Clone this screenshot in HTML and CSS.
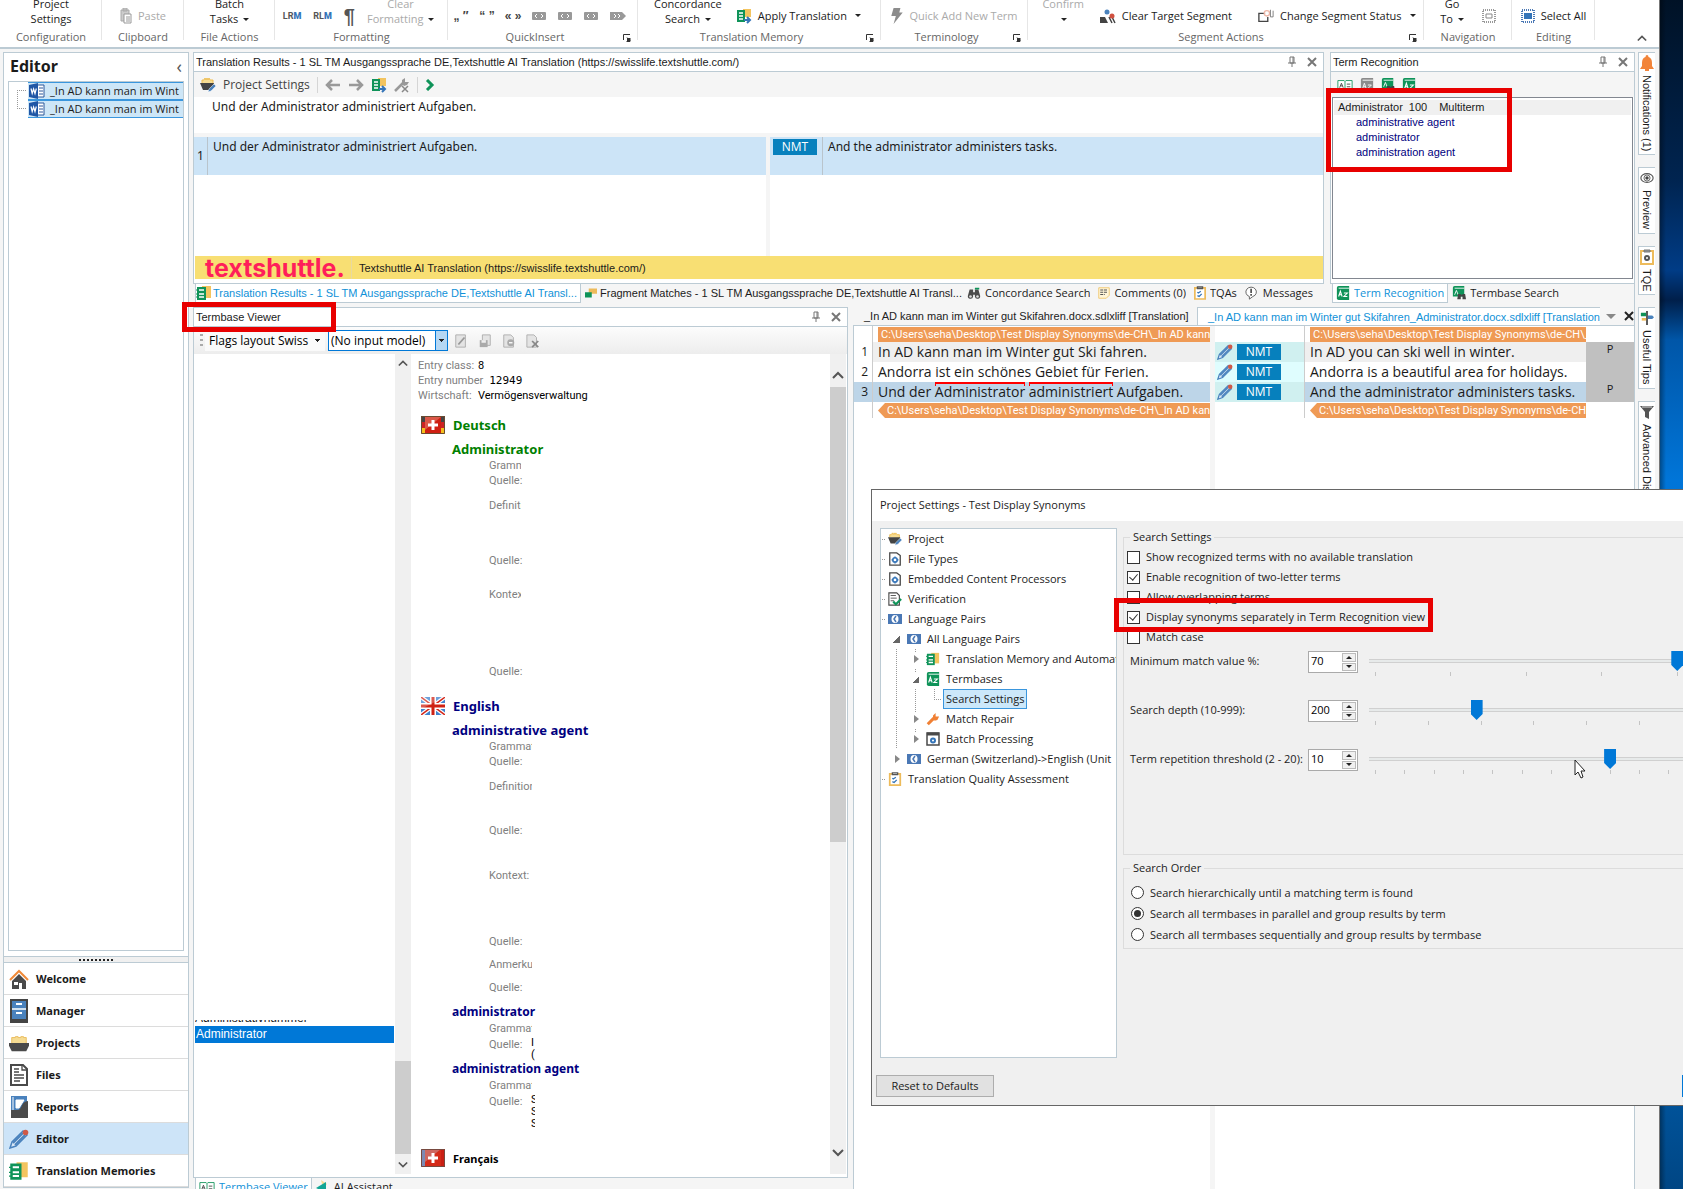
FILE: index.html
```html
<!DOCTYPE html>
<html lang="en">
<head>
<meta charset="utf-8">
<title>Editor</title>
<link rel="stylesheet" href="styles.css">
</head>
<body>
<svg class="sprite" aria-hidden="true">
  <symbol id="word" viewBox="0 0 16 16"><path d="M7 2h8v12H7z" fill="#fff" stroke="#2b579a"/><path d="M10 5h4M10 8h4M10 11h4" stroke="#2b579a"/><path d="M0 2l9-2v16l-9-2z" fill="#1f56a5"/><path d="M2 5.500l1.200 5L4.600 6l1.400 4.500 1.300-5" fill="none" stroke="#fff" stroke-width="1.200"/></symbol>
  <symbol id="project" viewBox="0 0 16 16"><path d="M2 6V3h2l1-2 1 2 1-2 1 2 1-2 1 2h3v4" fill="#f6dc93" stroke="#efbf55"/><path d="M0 6h14l-2 7H3z" fill="#444"/><path d="M8 15l1-3 5-5 2 2-5 5z" fill="#4a82bd" stroke="#fff" stroke-width=".5"/></symbol>
  <symbol id="tm" viewBox="0 0 16 16"><path d="M6 1h9v12H6z" fill="#f3c45f"/><path d="M1 2h9v13H1z" fill="#0f9359"/><path d="M3 5h5M3 9h5M3 12h5" stroke="#fff" stroke-width="1.500"/><path d="M0 5h2M0 9h2M0 12h2" stroke="#0f9359"/></symbol>
  <symbol id="tmarrow" viewBox="0 0 16 16"><path d="M7 1h8v8H7z" fill="#f3c45f"/><path d="M1 2h8v12H1z" fill="#0f9359"/><path d="M3 5h4M3 8h4M3 11h4" stroke="#fff" stroke-width="1.500"/><path d="M8 12h6M11 9l3 3-3 3" fill="none" stroke="#3474b8" stroke-width="2"/></symbol>
  <symbol id="wrenchx" viewBox="0 0 16 16"><path d="M1 14L9 6" stroke="#999" stroke-width="2.500"/><path d="M8 7V3l3-2v4h4l-2 3-3 1z" fill="#999"/><path d="M8 9l6 6M14 9l-6 6" stroke="#888" stroke-width="1.500"/></symbol>
  <symbol id="wrench" viewBox="0 0 16 16"><path d="M2 14L9 7" stroke="#f08034" stroke-width="3.500"/><path d="M8 8V4l3-3v4h4l-2 4-3 1z" fill="#f08034"/></symbol>
  <symbol id="left" viewBox="0 0 16 16"><path d="M15 8H3M7 3L2 8l5 5" fill="none" stroke="#999" stroke-width="2.500"/></symbol>
  <symbol id="right" viewBox="0 0 16 16"><path d="M1 8h12M9 3l5 5-5 5" fill="none" stroke="#999" stroke-width="2.500"/></symbol>
  <symbol id="go" viewBox="0 0 10 12"><path d="M2 1l5 5-5 5" fill="none" stroke="#0f9359" stroke-width="3"/></symbol>
  <symbol id="pin" viewBox="0 0 10 12"><path d="M3 1h4v6H3zM1 7h8M5 7v4M6 1v6" fill="none" stroke="#777"/></symbol>
  <symbol id="close" viewBox="0 0 10 10"><path d="M1 1l8 8M9 1L1 9" stroke="currentColor" stroke-width="2"/></symbol>
  <symbol id="az" viewBox="0 0 16 16"><path d="M1 2q0-2 2-2h12v16H3q-2 0-2-2z" fill="#0f9359"/><path d="M3 2.500h12" stroke="#fff"/><path d="M3 12l2-6 2 6M4 10h2M9 8h4l-4 4h4" fill="none" stroke="#fff" stroke-width="1.200"/></symbol>
  <symbol id="azgray" viewBox="0 0 16 16"><path d="M1 2q0-2 2-2h12v16H3q-2 0-2-2z" fill="#8b8b8b"/><path d="M3 2.500h12" stroke="#fff"/><path d="M3 12l2-6 2 6M4 10h2M9 8h4l-4 4h4" fill="none" stroke="#fff"/></symbol>
  <symbol id="azfind" viewBox="0 0 16 16"><path d="M1 2q0-2 2-2h11v12H1z" fill="#0f9359"/><path d="M3 2.500h11M3 10l2-5 2 5" fill="none" stroke="#fff"/><path d="M7 9h3v1h2V9h3l1 6h-4v-3h-2v3H6z" fill="#444"/></symbol>
  <symbol id="book" viewBox="0 0 18 14"><path d="M1 2h7l1 1 1-1h7v11h-7l-1 1-1-1H1zM9 3v10" fill="#fff" stroke="#15965c"/><path d="M3 10l2-5 2 5M4 8h2M11 6h4M11 9h4" fill="none" stroke="#444"/></symbol>
  <symbol id="frag" viewBox="0 0 16 16"><path d="M5 2h11v7H5z" fill="#edbb5b"/><path d="M0 7h9v7H0z" fill="#0f9359"/></symbol>
  <symbol id="bino" viewBox="0 0 16 16"><path d="M3 4h4v3h2V4h4l2 7a3 3 0 1 1-6 1V10H7v2a3 3 0 1 1-6-1z" fill="#4a4a4a"/><circle cx="4" cy="12" r="1.500" fill="#ddd"/><circle cx="12" cy="12" r="1.500" fill="#ddd"/><path d="M9 2h5v2H9z" fill="#0f9359"/></symbol>
  <symbol id="note" viewBox="0 0 16 16"><path d="M1 1h14v10l-4 4H1z" fill="#fff5d8" stroke="#eebd57"/><path d="M3 4h9M3 7h9M3 10h6" stroke="#555" stroke-width="1.500" stroke-dasharray="4 1"/></symbol>
  <symbol id="clip" viewBox="0 0 14 16"><path d="M1 2h12v13H1z" fill="#fff" stroke="#edbb5b" stroke-width="2"/><path d="M4 3V1h6v2z" fill="#fff" stroke="#555" stroke-width="1.500"/><path d="M4 7l1 1 3-2M4 11l2 1 3-3" fill="none" stroke="#3474b8" stroke-width="1.500"/></symbol>
  <symbol id="clipdot" viewBox="0 0 14 16"><path d="M1 2h12v13H1z" fill="#fff" stroke="#edbb5b" stroke-width="2"/><path d="M4 3V1h6v2z" fill="#999" stroke="#777"/><circle cx="7" cy="9" r="2" fill="none" stroke="#555" stroke-width="2"/></symbol>
  <symbol id="msg" viewBox="0 0 16 16"><path d="M5 12a6 5.500 0 1 1 4 0l-4 3z" fill="#fff" stroke="#555"/><path d="M7 3v5M7 9v2" stroke="#555" stroke-width="2"/></symbol>
  <symbol id="home" viewBox="0 0 20 20"><path d="M1 11l9-9 9 9" fill="none" stroke="#f08a38" stroke-width="2"/><path d="M3 12l7-7 7 7v8h-4v-6h-3v6H3z" fill="#4a4a4a"/><path d="M5 13h4v3H5z" fill="#fff"/></symbol>
  <symbol id="cabinet" viewBox="0 0 20 24"><path d="M2 1h16v22H2z" fill="#4a82bd" stroke="#444" stroke-width="2"/><path d="M3 10h14" stroke="#fff" stroke-width="1.500"/><path d="M7 5h6M7 14h6" stroke="#fff" stroke-width="2"/><path d="M2 20h16v3H2z" fill="#444"/></symbol>
  <symbol id="folder" viewBox="0 0 22 20"><path d="M3 10V4h4v-1h3v1h3v-1h3v1h3v6" fill="#f6dc93" stroke="#e9bb59"/><path d="M0 10h22v3l-3 6H3l-3-6z" fill="#4a4a4a"/></symbol>
  <symbol id="files" viewBox="0 0 20 24"><path d="M2 2h12l4 4v16H2z" fill="#fff" stroke="#4a4a4a" stroke-width="2"/><path d="M13 2v5h5M5 6h5M5 9h5M5 12h10M5 15h10M5 18h6" fill="none" stroke="#4a4a4a" stroke-width="1.300"/></symbol>
  <symbol id="reports" viewBox="0 0 20 24"><path d="M2 1h16v14H2z" fill="#4a82bd"/><path d="M4 2v14M7 5h8l-5 8H7z" fill="#fff" stroke="#fff"/><path d="M2 15h7c4 0 3-9 10-9v17H2z" fill="#4a4a4a"/></symbol>
  <symbol id="pencil" viewBox="0 0 20 20"><path d="M1 19l2-6L14 2l4 4L7 17z" fill="#dbe8f5" stroke="#4a82bd" stroke-width="1.500"/><path d="M4 14L14 4M6 16L16 6" stroke="#4a82bd" stroke-width="2"/><circle cx="16.500" cy="3.500" r="2.800" fill="#cf5947"/></symbol>
  <symbol id="geardoc" viewBox="0 0 14 16"><path d="M1 1h8l4 3v11H1z" fill="#fff" stroke="#4a4a4a" stroke-width="1.500"/><circle cx="7" cy="9" r="2.500" fill="#fff" stroke="#3474b8" stroke-width="1.800"/><path d="M7 5v2M7 11v2M3 9h2M9 9h2" stroke="#3474b8" stroke-width="1.500"/></symbol>
  <symbol id="verify" viewBox="0 0 16 16"><path d="M1 1h9l3 3v11H1z" fill="#fff" stroke="#4a4a4a" stroke-width="1.300"/><path d="M3 4h6M3 7h7M3 10h4" stroke="#4a4a4a"/><path d="M6 11l3 3 6-6" fill="none" stroke="#0f9359" stroke-width="2.500"/></symbol>
  <symbol id="lang" viewBox="0 0 14 12"><path d="M0 1h14v10H0z" fill="#4a78b5"/><ellipse cx="7" cy="6" rx="3.500" ry="4" fill="#fff"/><path d="M8 3L6 6l2 3" fill="none" stroke="#4a78b5" stroke-width="1.500"/></symbol>
  <symbol id="batch" viewBox="0 0 14 14"><path d="M1 1h12v12H1z" fill="#fff" stroke="#4a4a4a" stroke-width="1.500"/><path d="M1 2h12" stroke="#4a4a4a" stroke-width="3"/><circle cx="7" cy="8.500" r="2" fill="#fff" stroke="#3474b8" stroke-width="2"/></symbol>
  <symbol id="launch" viewBox="0 0 8 8"><path d="M.500 6V.500H7M4 3.500l3 3M7 4v3.500H3.500" fill="none" stroke="#333"/><path d="M4 4h3v3H4z" fill="#333"/></symbol>
  <symbol id="bell" viewBox="0 0 14 16"><path d="M7 0q1.500 0 1.500 2Q12 3 12 8v3l2 3H0l2-3V8Q2 3 5.500 2 5.500 0 7 0z" fill="#f2843a"/><path d="M5 15h4" stroke="#f2843a" stroke-width="2"/></symbol>
  <symbol id="eye" viewBox="0 0 16 14"><ellipse cx="8" cy="7" rx="7" ry="5" fill="#fff" stroke="#555" stroke-width="1.300"/><circle cx="8" cy="7" r="3.500" fill="none" stroke="#555"/><circle cx="8" cy="7" r="2" fill="#444"/></symbol>
  <symbol id="tips" viewBox="0 0 16 16"><path d="M8 0v16" stroke="#444" stroke-width="2"/><path d="M1 2h6v4H1z" fill="#0f9359"/><path d="M9 5h5l2 2-2 2H9z" fill="#4a82bd"/><path d="M2 8h5v3H2z" fill="#edbb5b"/></symbol>
  <symbol id="funnel" viewBox="0 0 14 14"><path d="M0 1h14L9 7v7l-4-2V7z" fill="#555"/><path d="M2 2h10" stroke="#ddd"/></symbol>
  <symbol id="ai" viewBox="0 0 14 14"><path d="M5 0l6 4-4 4z" fill="#f6dc93"/><path d="M0 8l10-6v11z" fill="#12a595"/><path d="M9 9l5 5H8z" fill="#e58aa8"/></symbol>
  <symbol id="paste" viewBox="0 0 12 16"><path d="M1 2h8v11H1zM3 0h4v3H3z" fill="#ccc" stroke="#aaa"/><path d="M4 6h7v9H4z" fill="#fff" stroke="#999"/><path d="M6 9h4M6 11h4M6 13h4" stroke="#999"/></symbol>
  <symbol id="bolt" viewBox="0 0 10 14"><path d="M2 0h6L7 4h3L2 14l2-7H0z" fill="#8c8c8c"/></symbol>
  <symbol id="clear" viewBox="0 0 16 14"><path d="M0 8h5l3 6H0z" fill="#444"/><path d="M9 8l3 6M12 8l3 6" stroke="#444" stroke-width="1.500"/><circle cx="7" cy="3" r="2.500" fill="#4a82bd"/><circle cx="12" cy="7" r="2.500" fill="#d0503f"/></symbol>
  <symbol id="status" viewBox="0 0 18 14"><path d="M8 4H1v9h10V8" fill="none" stroke="#444" stroke-width="1.500"/><circle cx="10" cy="4" r="3" fill="none" stroke="#f0b9a9" stroke-width="1.500"/><path d="M14 0v8h3V1" fill="none" stroke="#777"/></symbol>
  <symbol id="selblue" viewBox="0 0 14 14"><path d="M1 1h12v12H1z" fill="none" stroke="#4a78b5" stroke-dasharray="1 1" stroke-width="2"/><path d="M3 4h8v6H3z" fill="#3474b8"/></symbol>
  <symbol id="selgray" viewBox="0 0 14 14"><path d="M1 1h12v12H1z" fill="none" stroke="#999" stroke-dasharray="1 1" stroke-width="2"/><path d="M4 5h6v4H4z" fill="#fff" stroke="#888"/></symbol>
  <symbol id="tagi" viewBox="0 0 14 8"><rect width="14" height="8" rx="1" fill="#999"/><path d="M5 2L3 4l2 2M9 2l2 2-2 2" fill="none" stroke="#fff"/></symbol>
  <symbol id="tagend" viewBox="0 0 16 8"><path d="M0 0h12l4 4-4 4H0z" fill="#999"/><path d="M4 2l2 2-2 2M8 2l2 2-2 2" fill="none" stroke="#fff"/></symbol>
  <symbol id="up" viewBox="0 0 12 8"><path d="M1 7l5-5 5 5" fill="none" stroke="#555" stroke-width="2"/></symbol>
  <symbol id="down" viewBox="0 0 12 8"><path d="M1 1l5 5 5-5" fill="none" stroke="#555" stroke-width="2"/></symbol>
  <symbol id="docedit" viewBox="0 0 14 16"><path d="M1 1h11v14H1z" fill="#e4e4e4" stroke="#aaa"/><path d="M4 12l7-8" stroke="#999" stroke-width="2"/></symbol>
  <symbol id="docsave" viewBox="0 0 14 16"><path d="M4 1h9v12H4z" fill="#e4e4e4" stroke="#aaa"/><path d="M1 7h9v8H1z" fill="#aaa"/><path d="M3 7h5v3H3z" fill="#eee"/></symbol>
  <symbol id="docminus" viewBox="0 0 14 16"><path d="M1 1h8l3 3v11H1z" fill="#e4e4e4" stroke="#aaa"/><circle cx="9" cy="10" r="4" fill="#aaa"/><path d="M7 10h4" stroke="#fff" stroke-width="1.500"/></symbol>
  <symbol id="docx" viewBox="0 0 16 16"><path d="M1 1h8l3 3v11H1z" fill="#e4e4e4" stroke="#aaa"/><path d="M7 8l7 7M14 8l-7 7" stroke="#888" stroke-width="2"/></symbol>
  <symbol id="flagde" viewBox="0 0 24 18"><path d="M0 0h24v18H0z" fill="#444"/><path d="M0 6h24v6H0z" fill="#c22"/><path d="M0 12h24v6H0z" fill="#f4bf1c"/><path d="M4 1h16v16H4z" fill="#cf1f12"/><path d="M4 1h16L4 14z" fill="#e0705f" opacity=".7"/><path d="M12 4v10M7 9h10" stroke="#fff" stroke-width="3"/><path d="M.500.500h23v17H.500z" fill="none" stroke="#6b4a30"/></symbol>
  <symbol id="flagfr" viewBox="0 0 24 18"><path d="M0 0h24v18H0z" fill="#c91f14"/><path d="M0 0h5v18H0z" fill="#2f6fc0"/><path d="M4 1h16v16H4z" fill="#d42a18"/><path d="M0 0h20L4 13v5H0z" fill="#c8a4a8" opacity=".5"/><path d="M12 4v10M7 9h10" stroke="#fff" stroke-width="3"/><path d="M.500.500h23v17H.500z" fill="none" stroke="#77493f"/></symbol>
  <symbol id="flaguk" viewBox="0 0 24 18"><path d="M0 0h24v18H0z" fill="#3f83cf"/><path d="M0 0l24 18M24 0L0 18" stroke="#fff" stroke-width="4"/><path d="M0 0l24 18M24 0L0 18" stroke="#d3281b" stroke-width="1.500"/><path d="M12 0v18M0 9h24" stroke="#fff" stroke-width="6"/><path d="M12 0v18M0 9h24" stroke="#cf2214" stroke-width="3"/><path d="M0 0h24L0 12z" fill="#fff" opacity=".25"/></symbol>
  <symbol id="cursor" viewBox="0 0 12 20"><path d="M1 1v15l3-3 3 6 2-1-2-6h4z" fill="#fff" stroke="#222"/></symbol>
</svg>

<div class="app">
  <header class="ribbon">
    <section class="group g-config"><div class="items"><button class="two">Project<br>Settings</button></div><h2>Configuration</h2></section>
    <section class="group g-clip"><div class="items"><button disabled><svg class="i12x16"><use href="#paste"/></svg>Paste</button></div><h2>Clipboard</h2></section>
    <section class="group g-file"><div class="items"><button class="two">Batch<br>Tasks <i class="caret"></i></button></div><h2>File Actions</h2></section>
    <section class="group g-format"><div class="items"><button class="mark">LR<b>M</b></button><button class="mark">RL<b>M</b></button><button class="pilcrow">¶</button><button class="two" disabled>Clear<br>Formatting <i class="caret"></i></button></div><h2>Formatting</h2></section>
    <section class="group g-quick"><div class="items"><button class="q">„ ″</button><button class="q">“ ”</button><button class="q">« »</button><button aria-label="Tag pair"><svg class="i14x8"><use href="#tagi"/></svg></button><button aria-label="Tag"><svg class="i14x8"><use href="#tagi"/></svg></button><button aria-label="Placeholder"><svg class="i14x8"><use href="#tagi"/></svg></button><button aria-label="End tag"><svg class="i16x8"><use href="#tagend"/></svg></button></div><h2>QuickInsert</h2><svg class="launch"><use href="#launch"/></svg></section>
    <section class="group g-tm"><div class="items"><button class="two">Concordance<br>Search <i class="caret"></i></button><button><svg class="i16"><use href="#tmarrow"/></svg>Apply Translation <i class="caret"></i></button></div><h2>Translation Memory</h2><svg class="launch"><use href="#launch"/></svg></section>
    <section class="group g-term"><div class="items"><button disabled><svg class="i12x16"><use href="#bolt"/></svg>Quick Add New Term</button></div><h2>Terminology</h2><svg class="launch"><use href="#launch"/></svg></section>
    <section class="group g-seg"><div class="items"><button class="two" disabled>Confirm<br><i class="caret"></i></button><button><svg class="i16"><use href="#clear"/></svg>Clear Target Segment</button><button class="later"><svg class="i16"><use href="#status"/></svg>Change Segment Status <i class="caret"></i></button></div><h2>Segment Actions</h2><svg class="launch"><use href="#launch"/></svg></section>
    <section class="group g-nav"><div class="items"><button class="two">Go<br>To <i class="caret"></i></button><button aria-label="Navigate"><svg class="i14"><use href="#selgray"/></svg></button></div><h2>Navigation</h2></section>
    <section class="group g-edit"><div class="items"><button><svg class="i14"><use href="#selblue"/></svg>Select All</button></div><h2>Editing</h2></section>
    <button class="collapse" aria-label="Collapse ribbon"><svg class="i10x8"><use href="#up"/></svg></button>
  </header>

  <div class="work">
    <aside class="side">
      <div class="side-title"><h1>Editor</h1><span>‹</span></div>
      <ul class="doctree">
        <li><svg class="i16"><use href="#word"/></svg><span>_In AD kann man im Wint</span></li>
        <li><svg class="i16"><use href="#word"/></svg><span>_In AD kann man im Wint</span></li>
      </ul>
      <div class="grip"></div>
      <nav>
        <a href="#welcome"><svg class="i20"><use href="#home"/></svg>Welcome</a>
        <a href="#manager"><svg class="i20x24"><use href="#cabinet"/></svg>Manager</a>
        <a href="#projects"><svg class="i20"><use href="#folder"/></svg>Projects</a>
        <a href="#files"><svg class="i20x24"><use href="#files"/></svg>Files</a>
        <a href="#reports"><svg class="i20x24"><use href="#reports"/></svg>Reports</a>
        <a href="#editor" class="on"><svg class="i20"><use href="#pencil"/></svg>Editor</a>
        <a href="#tms"><svg class="i20"><use href="#tm"/></svg>Translation Memories</a>
      </nav>
    </aside>

    <main class="main">
      <div class="upper">
        <section class="pane results">
          <header class="pane-title"><span>Translation Results - 1 SL TM Ausgangssprache DE,Textshuttle AI Translation (https://swisslife.textshuttle.com/)</span><svg class="i10x12"><use href="#pin"/></svg><svg class="i10"><use href="#close"/></svg></header>
          <div class="tools">
            <svg class="i16"><use href="#project"/></svg><button>Project Settings</button><i class="sep"></i>
            <svg class="i16"><use href="#left"/></svg><svg class="i16"><use href="#right"/></svg><svg class="i16"><use href="#tmarrow"/></svg><svg class="i16"><use href="#wrenchx"/></svg><i class="sep"></i><svg class="i10x12"><use href="#go"/></svg>
          </div>
          <p class="query">Und der Administrator administriert Aufgaben.</p>
          <div class="matches">
            <div class="m-src"><div class="m-row"><span class="num">1</span><span class="txt">Und der Administrator administriert Aufgaben.</span></div></div>
            <div class="m-tgt"><div class="m-row"><span class="st"><span class="nmt">NMT</span></span><span class="txt">And the administrator administers tasks.</span></div></div>
          </div>
          <div class="provider"><strong>textshuttle.</strong><span>Textshuttle AI Translation (https://swisslife.textshuttle.com/)</span></div>
        </section>
        <section class="pane terms">
          <header class="pane-title"><span>Term Recognition</span><svg class="i10x12"><use href="#pin"/></svg><svg class="i10"><use href="#close"/></svg></header>
          <div class="tools"><svg class="i16"><use href="#book"/></svg><svg class="i14"><use href="#azgray"/></svg><svg class="i14"><use href="#azfind"/></svg><svg class="i14"><use href="#az"/></svg></div>
          <div class="termlist">
            <p class="hit"><span>Administrator</span><span>100</span><span>Multiterm</span></p>
            <ul><li>administrative agent</li><li>administrator</li><li>administration agent</li></ul>
          </div>
        </section>
        <div class="tabs t-results">
          <button class="on wide"><svg class="i16"><use href="#tm"/></svg><span>Translation Results - 1 SL TM Ausgangssprache DE,Textshuttle AI Transl...</span></button>
          <button class="wide2"><svg class="i12x16"><use href="#frag"/></svg><span>Fragment Matches - 1 SL TM Ausgangssprache DE,Textshuttle AI Transl...</span></button>
          <button><svg class="i14"><use href="#bino"/></svg><span>Concordance Search</span></button>
          <button><svg class="i12x16"><use href="#note"/></svg><span>Comments (0)</span></button>
          <button><svg class="i12x16"><use href="#clip"/></svg><span>TQAs</span></button>
          <button><svg class="i14"><use href="#msg"/></svg><span>Messages</span></button>
        </div>
        <div class="tabs t-terms">
          <button class="on"><svg class="i14"><use href="#az"/></svg><span>Term Recognition</span></button>
          <button><svg class="i14"><use href="#azfind"/></svg><span>Termbase Search</span></button>
        </div>
      </div>

      <div class="lower">
        <div class="viewer">
          <section class="pane">
            <header class="pane-title"><span>Termbase Viewer</span><svg class="i10x12"><use href="#pin"/></svg><svg class="i10"><use href="#close"/></svg></header>
            <div class="vtools">
              <i class="handle"></i>
              <select class="plain" aria-label="Layout"><option>Flags layout Swiss</option></select>
              <select class="model" aria-label="Input model"><option>(No input model)</option></select>
              <svg class="i14"><use href="#docedit"/></svg><svg class="i14"><use href="#docsave"/></svg><svg class="i14"><use href="#docminus"/></svg><svg class="i14"><use href="#docx"/></svg>
            </div>
            <div class="vbody">
              <div class="index"><p class="cut">Administrativnummer</p><p class="sel">Administrator</p></div>
              <div class="bar left"><svg class="i10x8"><use href="#up"/></svg><i></i><svg class="i10x8"><use href="#down"/></svg></div>
              <article class="entry">
                <p class="meta"><span>Entry class:</span>8</p>
                <p class="meta"><span>Entry number</span><tt>12949</tt></p>
                <p class="meta"><span>Wirtschaft:</span>Vermögensverwaltung</p>
                <h3 class="de first"><svg class="flag"><use href="#flagde"/></svg>Deutsch</h3>
                <h4 class="de">Administrator</h4>
                <p class="f cut32">Grammatik:</p>
                <p class="f">Quelle:</p>
                <p class="f cut32 s9">Definition:</p>
                <p class="f s40">Quelle:</p>
                <p class="f cut32 s19">Kontext:</p>
                <p class="f s62">Quelle:</p>
                <h3 class="en"><svg class="flag"><use href="#flaguk"/></svg>English</h3>
                <h4 class="en">administrative agent</h4>
                <p class="f cut43">Grammatik:</p>
                <p class="f">Quelle:</p>
                <p class="f cut43 s9">Definition:</p>
                <p class="f s29">Quelle:</p>
                <p class="f s30">Kontext:</p>
                <p class="f s51">Quelle:</p>
                <p class="f cut43 s8">Anmerkung:</p>
                <p class="f s8">Quelle:</p>
                <h4 class="en syn">administrator</h4>
                <p class="f cut43">Grammatik:</p>
                <p class="f src"><span>Quelle:</span><span class="val">I<br>(</span></p>
                <h4 class="en syn">administration agent</h4>
                <p class="f cut43">Grammatik:</p>
                <p class="f src tall"><span>Quelle:</span><span class="val">S<br>S<br>S</span></p>
                <h3 class="fr"><svg class="flag"><use href="#flagfr"/></svg>Français</h3>
              </article>
              <div class="bar right"><svg class="i12x8"><use href="#up"/></svg><i></i><svg class="i12x8"><use href="#down"/></svg></div>
            </div>
          </section>
          <div class="tabs t-viewer"><button class="on"><svg class="i16"><use href="#book"/></svg><span>Termbase Viewer</span></button><button><svg class="i14"><use href="#ai"/></svg><span>AI Assistant</span></button></div>
        </div>

        <section class="docs">
          <div class="doctabs"><button>_In AD kann man im Winter gut Skifahren.docx.sdlxliff [Translation]</button><button class="on">_In AD kann man im Winter gut Skifahren_Administrator.docx.sdlxliff [Translation]</button><i class="tri"></i><svg class="i10"><use href="#close"/></svg></div>
          <table class="grid">
            <colgroup><col class="c-n"><col><col class="c-g"><col class="c-s"><col class="c-t"><col class="c-p"></colgroup>
            <tr class="tags"><td></td><td class="s"><div class="tag">C:\Users\seha\Desktop\Test Display Synonyms\de-CH\_In AD kann man im Winter</div></td><td class="g"></td><td></td><td class="s"><div class="tag">C:\Users\seha\Desktop\Test Display Synonyms\de-CH\_In AD kann</div></td><td></td></tr>
            <tr class="r1"><td>1</td><td class="s">In AD kann man im Winter gut Ski fahren.</td><td class="g"></td><td class="st"><svg class="i16"><use href="#pencil"/></svg><span class="nmt">NMT</span></td><td class="s">In AD you can ski well in winter.</td><td class="p">P</td></tr>
            <tr class="r2"><td>2</td><td class="s">Andorra ist ein schönes Gebiet für Ferien.</td><td class="g"></td><td class="st"><svg class="i16"><use href="#pencil"/></svg><span class="nmt">NMT</span></td><td class="s">Andorra is a beautiful area for holidays.</td><td class="p"></td></tr>
            <tr class="r3"><td>3</td><td class="s">Und der <span class="term">Administrator</span> <span class="term">administriert</span> Aufgaben.</td><td class="g"></td><td class="st"><svg class="i16"><use href="#pencil"/></svg><span class="nmt">NMT</span></td><td class="s">And the administrator administers tasks.</td><td class="p">P</td></tr>
            <tr class="tags"><td></td><td class="s"><div class="tag end">C:\Users\seha\Desktop\Test Display Synonyms\de-CH\_In AD kann man im Winter</div></td><td class="g"></td><td></td><td class="s"><div class="tag end">C:\Users\seha\Desktop\Test Display Synonyms\de-CH\_In AD kann</div></td><td></td></tr>
            <tr class="rest"><td></td><td></td><td class="g"></td><td></td><td></td><td></td></tr>
          </table>
        </section>
      </div>
    </main>

    <div class="vtabs">
      <button><svg class="i14x16"><use href="#bell"/></svg><span>Notifications (1)</span></button>
      <button><svg class="i14x16"><use href="#eye"/></svg><span>Preview</span></button>
      <button><svg class="i14x16"><use href="#clipdot"/></svg><span>TQE</span></button>
      <button><svg class="i14x16"><use href="#tips"/></svg><span>Useful Tips</span></button>
      <button><svg class="i14x16"><use href="#funnel"/></svg><span>Advanced Display Filter</span></button>
    </div>
  </div>
</div>
<div class="wallpaper"></div>

<section class="dialog" role="dialog" aria-labelledby="dlg">
  <h2 id="dlg">Project Settings - Test Display Synonyms</h2>
  <div class="dlg-body">
    <ul class="tree">
      <li><svg class="i16"><use href="#project"/></svg>Project</li>
      <li><svg class="i16"><use href="#geardoc"/></svg>File Types</li>
      <li><svg class="i16"><use href="#geardoc"/></svg>Embedded Content Processors</li>
      <li><svg class="i16"><use href="#verify"/></svg>Verification</li>
      <li><svg class="i16"><use href="#lang"/></svg>Language Pairs</li>
      <li class="l1"><i class="open"></i><svg class="i16"><use href="#lang"/></svg>All Language Pairs</li>
      <li class="l2"><i class="shut"></i><svg class="i16"><use href="#tm"/></svg>Translation Memory and Automat</li>
      <li class="l2"><i class="open"></i><svg class="i16"><use href="#az"/></svg>Termbases</li>
      <li class="l3"><span class="picked">Search Settings</span></li>
      <li class="l2"><i class="shut"></i><svg class="i16"><use href="#wrench"/></svg>Match Repair</li>
      <li class="l2"><i class="shut"></i><svg class="i16"><use href="#batch"/></svg>Batch Processing</li>
      <li class="l1"><i class="shut"></i><svg class="i16"><use href="#lang"/></svg>German (Switzerland)-&gt;English (Unit</li>
      <li><svg class="i16"><use href="#clip"/></svg>Translation Quality Assessment</li>
    </ul>
    <div class="opts">
      <fieldset class="fs1">
        <legend>Search Settings</legend>
        <label><input type="checkbox">Show recognized terms with no available translation</label>
        <label><input type="checkbox" checked>Enable recognition of two-letter terms</label>
        <label><input type="checkbox">Allow overlapping terms</label>
        <label><input type="checkbox" checked>Display synonyms separately in Term Recognition view</label>
        <label><input type="checkbox">Match case</label>
        <div class="num-row"><label for="n1">Minimum match value %:</label><span class="spin"><input id="n1" type="text" value="70"><span><button aria-label="More"></button><button aria-label="Less" class="less"></button></span></span>
          <div class="slide"><input type="range" min="30" max="100" value="70" aria-label="Minimum match value"><div class="ticks"><i></i><i></i><i></i><i></i><i></i><i></i><i></i><i></i></div></div></div>
        <div class="num-row"><label for="n2">Search depth (10-999):</label><span class="spin"><input id="n2" type="text" value="200"><span><button aria-label="More"></button><button aria-label="Less" class="less"></button></span></span>
          <div class="slide"><input type="range" min="10" max="999" value="200" aria-label="Search depth"><div class="ticks"><i></i><i></i><i></i><i></i><i></i><i></i><i></i><i></i><i></i><i></i><i></i></div></div></div>
        <div class="num-row"><label for="n3">Term repetition threshold (2 - 20):</label><span class="spin"><input id="n3" type="text" value="10"><span><button aria-label="More"></button><button aria-label="Less" class="less"></button></span></span>
          <div class="slide"><input type="range" min="2" max="20" value="10" aria-label="Term repetition threshold"><div class="ticks"><i></i><i></i><i></i><i></i><i></i><i></i><i></i><i></i><i></i><i></i><i></i><i></i><i></i><i></i><i></i><i></i><i></i><i></i><i></i></div></div></div>
      </fieldset>
      <fieldset class="fs2">
        <legend>Search Order</legend>
        <label><input type="radio" name="order">Search hierarchically until a matching term is found</label>
        <label><input type="radio" name="order" checked>Search all termbases in parallel and group results by term</label>
        <label><input type="radio" name="order">Search all termbases sequentially and group results by termbase</label>
      </fieldset>
    </div>
  </div>
  <footer><button>Reset to Defaults</button><button class="ok" aria-label="OK"></button></footer>
</section>
<svg class="cursor"><use href="#cursor"/></svg>
<div class="callout c1"></div>
<div class="callout c2"></div>
<div class="callout c3"></div>
</body>
</html>
```
FILE: styles.css
```css
:root {
  --ui: "Open Sans", "Noto Sans", sans-serif;
  --wide: "Noto Sans", "Open Sans", sans-serif;
  --arial: "Liberation Sans", Arial, sans-serif;
  --narrow: Roboto, "Liberation Sans", sans-serif;
  --line: #bccbd4;
  --ink: #1b1b1b;
  --navy: #000080;
  --dots: repeating-linear-gradient(#999 0 1px, transparent 1px 2px);
  --dots-x: repeating-linear-gradient(90deg, #999 0 1px, transparent 1px 2px);
}
* { box-sizing: border-box; }
body {
  margin: 0; height: 100vh; overflow: hidden; position: relative;
  display: flex; font: 11px/14px var(--ui); color: var(--ink); background: #f5f5f5;
}
h1, h2, h3, h4, p, ul { margin: 0; padding: 0; list-style: none; font-size: inherit; }
button { font: inherit; color: inherit; background: none; border: 0; padding: 0; margin: 0; white-space: nowrap; }
a { color: inherit; text-decoration: none; }
svg { flex: none; display: block; }
.sprite { position: absolute; width: 0; height: 0; }
.i10 { width: 10px; height: 10px; }
.i14 { width: 14px; height: 14px; }
.i16 { width: 16px; height: 16px; }
.i20 { width: 20px; height: 20px; }
.i20x24 { width: 20px; height: 24px; }
.i10x12 { width: 10px; height: 12px; }
.i10x8 { width: 10px; height: 8px; }
.i12x8 { width: 12px; height: 8px; }
.i12x16 { width: 12px; height: 16px; }
.i14x16 { width: 14px; height: 16px; }
.i14x8 { width: 14px; height: 8px; }
.i16x8 { width: 16px; height: 8px; }

.app { flex: 1; min-width: 0; display: flex; flex-direction: column; border-right: 1px solid #777; }
.wallpaper { width: 23px; background: linear-gradient(90deg, rgba(0, 0, 0, .35), transparent 6px), linear-gradient(#001226, #002450 180px, #003c86 270px, #001f4a 300px, #0056a8 340px, #0075d8 480px, #0064b8 800px, #005299 1105px, #004684); }

/* ribbon */
.ribbon { height: 49px; flex: none; display: flex; background: #fff; border-bottom: 2px solid #bccbd4; overflow: hidden; }
.group { position: relative; flex: none; height: 44px; display: flex; flex-direction: column; justify-content: flex-end; }
.group::after { content: ""; position: absolute; right: 0; top: 0; height: 40px; border-right: 1px solid #e6e6e6; }
.group h2 { font-weight: 400; color: #666; text-align: center; margin-top: 3px; }
.items { height: 22px; display: flex; align-items: center; justify-content: center; }
.items button { display: flex; align-items: center; gap: 6px; }
.items .two { display: block; align-self: flex-end; line-height: 15px; text-align: center; padding-bottom: 1px; }
.items button:disabled { color: #aaa; }
.items .mark { font: 700 9px/14px var(--narrow); gap: 0; color: #555; }
.mark b { color: #3474b8; }
.items .pilcrow { font: 700 20px/20px var(--arial); color: #555; }
.items .q { font: 700 12px/14px var(--arial); color: #444; width: 14px; justify-content: center; }
.caret { display: inline-block; border: 3px solid transparent; border-top-color: #222; border-bottom: 0; margin: 0 0 2px 2px; }
.launch { position: absolute; right: 7px; top: 34px; width: 8px; height: 8px; }
.g-config { width: 102px; } .g-clip { width: 82px; } .g-file { width: 91px; }
.g-format { width: 173px; } .g-format .items { gap: 12px; padding-right: 6px; }
.g-quick { width: 190px; } .g-quick .items { gap: 12px; padding-right: 6px; }
.g-tm { width: 243px; } .g-tm .items { gap: 14px; padding-right: 4px; }
.g-term { width: 147px; } .g-quick h2, .g-tm h2, .g-term h2 { padding-right: 16px; }
.g-seg { width: 396px; } .g-seg .items { gap: 16px; padding-left: 6px; } .later { margin-left: 10px; }
.g-seg h2 { padding-right: 10px; }
.g-nav { width: 88px; } .g-nav .items { gap: 18px; }
.g-edit { width: 83px; }
.collapse { margin-left: auto; align-self: flex-end; padding: 5px 12px; }

.work { flex: 1; min-height: 0; display: flex; padding-top: 3px; }

/* sidebar */
.side { width: 186px; margin: 0 4px 1px 3px; flex: none; display: flex; flex-direction: column; background: #fff; border: 1px solid var(--line); }
.side-title { height: 26px; margin-bottom: 2px; display: flex; align-items: center; justify-content: space-between; padding: 0 6px; }
.side-title h1 { font: 700 16px/20px var(--wide); }
.side-title span { font-size: 18px; color: #555; }
.doctree { flex: 1; margin: 0 4px 5px; border: 1px solid var(--line); padding-left: 19px; overflow: hidden; background: var(--dots) 8px 8px / 1px 19px no-repeat, var(--dots-x) 8px 8px / 10px 1px no-repeat, var(--dots-x) 8px 26px / 10px 1px no-repeat; }
.doctree li { height: 18px; display: flex; align-items: center; gap: 5px; background: #cde6f7; border: solid #3a96dd; border-width: 1px 0; overflow: hidden; white-space: nowrap; padding-left: 1px; }
.grip { height: 7px; flex: none; background: #f0f0f0; border: solid var(--line); border-width: 1px 0; }
.grip::after { content: ""; display: block; width: 35px; height: 2px; margin: 2px auto; background: repeating-linear-gradient(90deg, #222 0 2px, transparent 2px 4px); }
.side nav a { height: 32px; display: flex; align-items: center; gap: 7px; padding-left: 5px; font: 700 11px/14px var(--wide); border-bottom: 1px solid #dcdcdc; }
.side nav .on { background: #cde4f8; }

/* panes */
.main { flex: 1; min-width: 0; display: flex; flex-direction: column; }
.pane { display: flex; flex-direction: column; border: 1px solid var(--line); border-top: 0; background: #fff; min-width: 0; min-height: 0; }
.pane-title { height: 20px; flex: none; display: flex; align-items: center; gap: 10px; padding: 0 6px 0 2px; margin: 0 -1px; border: 1px solid var(--line); color: #777; }
.pane-title span { flex: 1; font: 11px/16px var(--arial); color: var(--ink); white-space: nowrap; overflow: hidden; }
.upper { flex: none; display: grid; grid-template-columns: 1fr 305px; grid-template-rows: 232px 20px; column-gap: 6px; height: 255px; }
.tools { height: 25px; flex: none; background: #f5f5f5; display: flex; align-items: center; padding-left: 6px; }
.results .tools { gap: 7px; }
.tools .sep { height: 16px; border-left: 1px solid #d5d5d5; }
.results .tools button { font: 12px/16px var(--ui); color: #444; }
.query { height: 40px; flex: none; border-bottom: 4px solid #f5f5f5; padding: 3px 18px; font: 12px/14px var(--wide); }
.matches { flex: 1; display: grid; grid-template-columns: 576px 1fr; }
.m-src { border-right: 4px solid #f5f5f5; }
.m-row { height: 38px; background: #cce4f7; display: flex; font: 12px/14px var(--wide); }
.m-row .num { width: 14px; display: flex; align-items: center; padding-left: 3px; border-right: 1px solid #b9c4cc; }
.m-row .txt { padding: 3px 5px; }
.m-row .st { width: 53px; padding: 2px 3px; border-right: 1px solid #b9c4cc; }
.nmt { display: block; width: 44px; height: 16px; background: #0780bd; color: #fff; font: 12px/16px var(--ui); text-align: center; }
.provider { height: 23px; flex: none; margin: 0 0 4px 1px; background: #f8df73; display: flex; align-items: center; padding-left: 10px; font: 11px/14px var(--arial); }
.provider strong { font: 700 25px/22px Inter, sans-serif; color: #ff1f5a; width: 146px; }
.provider span { padding-left: 7px; border-left: 1px solid #e8d9a0; line-height: 22px; }
.terms .tools { gap: 7px; padding-left: 6px; }
.termlist { flex: 1; margin: 0 1px 4px; border: 1px solid #828790; padding: 2px 1px; font: 11px/15px var(--arial); }
.hit { background: #f0f0f0; padding-left: 4px; display: flex; gap: 6px; }
.hit span:last-child { padding-left: 6px; }
.termlist ul { padding-left: 22px; color: var(--navy); }
.tabs { display: flex; padding-left: 2px; font-size: 11px; min-width: 0; }
.tabs button { height: 19px; display: flex; align-items: center; gap: 4px; padding: 0 3px; border: 1px solid transparent; border-top: 0; }
.tabs span { overflow: hidden; }
.tabs .on { background: #fff; border-color: var(--line); color: #1091d8; }
.tabs .wide { width: 386px; gap: 1px; padding: 0; font: 11px/14px var(--arial); flex: none; }
.tabs .wide2 { width: 382px; padding: 0 0 0 3px; gap: 3px; font: 11px/14px var(--arial); flex: none; }

/* termbase viewer */
.lower { flex: 1; min-height: 0; display: flex; gap: 5px; }
.viewer { width: 655px; flex: none; display: flex; flex-direction: column; }
.viewer .pane { flex: 1; }
.t-viewer { height: 11px; flex: none; overflow: hidden; }
.vtools { height: 27px; flex: none; display: flex; align-items: center; gap: 10px; padding: 0 6px; background: linear-gradient(#fcfcfc, #ededed); }
.handle { width: 3px; height: 14px; background: repeating-linear-gradient(#aaa 0 2px, transparent 2px 5px); }
.vtools select { appearance: none; font: 12px/18px var(--ui); height: 21px; border: 0; border-radius: 0; color: #000; margin: 0; padding: 0 2px; }
.vtools .plain { width: 120px; margin-left: -8px; padding-left: 4px; background: linear-gradient(#222, #222) right 5px top 9px / 5px 1px no-repeat, linear-gradient(#222, #222) right 6px top 10px / 3px 1px no-repeat, linear-gradient(#222, #222) right 7px top 11px / 1px 1px no-repeat, #fafafa; }
.vtools .model { width: 120px; margin: 0 -4px 0 -7px; border: 1px solid #0078d7; background: linear-gradient(#222, #222) right 3px top 8px / 5px 1px no-repeat, linear-gradient(#222, #222) right 4px top 9px / 3px 1px no-repeat, linear-gradient(#222, #222) right 5px top 10px / 1px 1px no-repeat, linear-gradient(#0078d7, #0078d7) right 11px top 0 / 1px 100% no-repeat, linear-gradient(#b5d7f3, #b5d7f3) right top / 11px 100% no-repeat, #fff; }
.vbody { flex: 1; min-height: 0; display: flex; margin-bottom: 3px; }
.index { width: 201px; flex: none; padding: 0 1px; display: flex; flex-direction: column; justify-content: flex-end; padding-bottom: 131px; font: 12px/17px var(--arial); }
.cut { height: 3px; overflow: hidden; display: flex; align-items: flex-end; line-height: 10px; margin-bottom: 3px; }
.sel { background: #0078d7; color: #fff; padding-left: 1px; }
.bar { width: 16px; flex: none; background: #f0f0f0; display: flex; flex-direction: column; align-items: center; padding: 5px 0; }
.bar i { width: 100%; background: #cdcdcd; }
.bar.left i { height: 93px; margin: auto 0 7px; }
.bar.right { padding: 17px 0; margin-right: 1px; }
.bar.right i { height: 455px; margin: 8px 0 auto; }
.entry { flex: 1; min-width: 0; overflow: hidden; padding: 4px 0 0 7px; font: 11px/15px var(--narrow); }
.meta { display: flex; color: #000; }
.meta span { color: #808080; min-width: 60px; flex: none; white-space: nowrap; }
.meta tt { font: 11px/15px "DejaVu Sans Mono", monospace; padding-left: 6px; }
.entry h3 { display: flex; align-items: center; gap: 8px; height: 18px; padding-left: 3px; font: 700 13px/15px var(--wide); margin-top: 18px; }
.entry h3.first { margin-top: 13px; }
.entry h3.fr { margin-top: 19px; font-size: 11px; }
.entry h4 { font: 700 13px/16px var(--wide); margin: 7px 0 1px 34px; }
.entry h4.syn { font-size: 12px; margin-top: 9px; }
.entry .src + h4.syn { margin-top: 0; }
.flag { width: 24px; height: 18px; }
.de { color: #008000; } .en { color: var(--navy); } .fr { color: #000; }
.f { height: 15px; margin-left: 71px; color: #808080; overflow: hidden; white-space: nowrap; }
.cut32 { width: 32px; } .cut43 { width: 43px; }
.s8 { margin-top: 8px; } .s9 { margin-top: 10px; } .s19 { margin-top: 19px; } .s29 { margin-top: 29px; } .s30 { margin-top: 30px; } .s40 { margin-top: 40px; } .s51 { margin-top: 51px; } .s62 { margin-top: 62px; }
.f.src { height: 24px; margin-top: 1px; display: flex; width: 46px; justify-content: space-between; }
.f.src.tall { height: 36px; }
.src .val { width: 4px; overflow: hidden; color: #000; line-height: 12px; }

/* document editor */
.docs { flex: 1; min-width: 0; display: flex; flex-direction: column; }
.doctabs { height: 18px; flex: none; display: flex; align-items: center; color: #222; }
.doctabs button { font: 11px/16px var(--arial); height: 18px; padding-left: 11px; width: 344px; text-align: left; overflow: hidden; }
.doctabs .on { width: 403px; background: #fff; color: #1091d8; border: 1px solid var(--line); border-width: 1px 0 0 1px; padding-left: 10px; }
.tri { border: 5px solid transparent; border-top-color: #888; border-bottom: 0; margin: 0 8px 0 6px; }
.grid { flex: 1; width: 100%; table-layout: fixed; border-collapse: separate; border-spacing: 0; background: #fff; border: 1px solid var(--line); border-bottom: 0; }
.grid td { height: 20px; padding: 0; overflow: hidden; white-space: nowrap; }
.c-n { width: 18px; } .c-g { width: 5px; } .c-s { width: 89px; } .c-t { width: 282px; } .c-p { width: 48px; }
.grid td:first-child { text-align: right; padding-right: 4px; font-size: 12px; }
.grid .tags td { height: 16px; vertical-align: top; line-height: 15px; }
.grid .s { border-left: 1px solid #ccc; padding-left: 5px; font-size: 14px; line-height: 20px; }
.grid .tags .s { font-size: 11px; }
.grid .g { background: #f5f5f5; }
.grid .st { display: flex; align-items: center; gap: 4px; padding-left: 2px; background: #d0f0f0; }
.grid .r2 .st { background: #dffdfe; }
.r1 .s { background: #efefef; }
.grid .r3 td:first-child, .r3 .s { background: #bdd5e8; }
.grid .p { background: #c0c0c0; text-align: center; vertical-align: top; font-size: 11px; }
.grid .rest td { height: auto; }
.tag { height: 15px; margin-top: 1px; background: #ef9a55; color: #fff; font: 11px/15px var(--narrow); padding-left: 3px; overflow: hidden; }
.tag.end { padding-left: 9px; clip-path: polygon(0 50%, 7px 0, 100% 0, 100% 100%, 7px 100%); }
.term { background: linear-gradient(#f00, #f00) top / 100% 2px no-repeat, linear-gradient(#f00, #f00) left top / 1px 4px no-repeat, linear-gradient(#f00, #f00) right top / 1px 4px no-repeat; }

/* docked tabs on the right edge */
.vtabs { width: 25px; padding: 0 4px 0 3px; flex: none; overflow: hidden; display: flex; flex-direction: column; gap: 12px; border-left: 1px solid var(--line); margin-left: -1px; }
.vtabs button { flex: none; display: flex; flex-direction: column; align-items: center; gap: 4px; padding: 2px 0 3px; background: #fff; border: 1px solid var(--line); border-right: 0; }
.vtabs span { writing-mode: vertical-rl; font: 11px/14px var(--arial); }

/* settings window */
.dialog { position: absolute; left: 871px; right: 0; top: 489px; height: 617px; background: #f0f0f0; border: 1px solid #666; border-right: 0; overflow: hidden; display: flex; flex-direction: column; }
.dialog h2 { height: 31px; flex: none; background: #fff; font-weight: 400; line-height: 30px; padding-left: 8px; }
.dlg-body { flex: 1; display: flex; gap: 6px; padding: 7px 0 0 8px; }
.tree { width: 237px; height: 530px; flex: none; background: #fff; border: 1px solid var(--line); overflow: hidden; }
.tree li { height: 20px; display: flex; align-items: center; gap: 6px; padding-left: 6px; white-space: nowrap; background: var(--dots-x) 1px 10px / 4px 1px no-repeat; }
.tree svg { width: 14px; height: 14px; margin-left: 1px; }
.tree .l1 { padding-left: 12px; background: none; }
.tree .l2 { padding-left: 31px; background: var(--dots) 15px 0 / 1px 20px no-repeat, var(--dots) 34px 0 / 1px 4px no-repeat; }
.tree .l3 { padding-left: 62px; background: var(--dots) 15px 0 / 1px 20px no-repeat, var(--dots) 34px 0 / 1px 20px no-repeat, var(--dots) 53px 0 / 1px 10px no-repeat, var(--dots-x) 53px 10px / 8px 1px no-repeat; }
.open { width: 7px; height: 7px; flex: none; background: linear-gradient(135deg, transparent 50%, #666 50%); }
.shut { width: 7px; height: 8px; flex: none; background: #888; clip-path: polygon(2px 0, 7px 4px, 2px 8px); }
.picked { background: #cce8fa; border: 1px solid #3a96dd; padding: 2px; line-height: 14px; }
.opts { width: 820px; flex: none; padding-top: 1px; }
fieldset { margin: 0; border: 1px solid #dcdcdc; padding: 0; min-width: 0; position: relative; }
legend { margin-left: 6px; padding: 0 3px; line-height: 16px; }
.fs1 { height: 326px; } .fs2 { height: 89px; margin-top: 5px; }
fieldset > label { display: flex; align-items: center; gap: 6px; height: 20px; margin-left: 3px; }
.fs1 > legend + label { margin-top: 2px; }
input[type=checkbox], input[type=radio] { appearance: none; width: 13px; height: 13px; margin: 0; background: #fff; border: 1px solid #333; display: grid; place-items: center; }
input[type=checkbox]:checked::after { content: ""; width: 4px; height: 7px; border: solid #333; border-width: 0 1px 1px 0; transform: rotate(40deg); margin-top: -2px; }
input[type=radio] { border-radius: 50%; }
input[type=radio]:checked::after { content: ""; width: 7px; height: 7px; border-radius: 50%; background: #333; }
.fs2 > legend + label { margin-top: 6px; }
.fs2 > label { height: 21px; margin-left: 7px; }
.num-row { display: flex; height: 49px; padding-left: 6px; }
.fs1 > label + .num-row { margin-top: 4px; }
.num-row > label { width: 178px; line-height: 20px; }
.spin { width: 50px; height: 22px; display: flex; border: 1px solid #aaa; background: #fff; flex: none; }
.spin input { width: 32px; border: 0; padding: 0 2px; font: 11px/18px var(--ui); height: 18px; background: none; }
.spin > span { flex: 1; display: grid; gap: 1px; padding: 1px; }
.spin button { background: #f0f0f0; border: 1px solid #bbb; display: grid; place-items: center; }
.spin button::after { content: ""; border: 3px solid transparent; border-top: 0; border-bottom-color: #222; }
.spin .less::after { border: 3px solid transparent; border-bottom: 0; border-top-color: #222; }
.slide { width: 541px; margin-left: 11px; flex: none; }
.slide input { appearance: none; display: block; width: 100%; height: 20px; margin: 0; background: linear-gradient(#e7eaea, #e7eaea) center / 100% 2px no-repeat, linear-gradient(#d0d0d0, #d0d0d0) center / 100% 4px no-repeat; }
.slide input::-webkit-slider-thumb { appearance: none; width: 12px; height: 20px; background: #0078d7; clip-path: polygon(0 0, 100% 0, 100% 14px, 50% 100%, 0 14px); }
.ticks { display: flex; justify-content: space-between; padding: 1px 6px; }
.ticks i { width: 1px; height: 4px; background: #c4c4c4; }
.dialog footer { display: flex; justify-content: space-between; padding: 0 0 8px 4px; }
.dialog footer button { width: 118px; height: 22px; background: #e1e1e1; border: 1px solid #adadad; flex: none; }
.dialog footer .ok { border: 2px solid #0078d7; margin-right: -117px; }
.cursor { position: absolute; left: 1574px; top: 759px; width: 12px; height: 20px; }

/* highlight frames */
.callout { position: absolute; border: 5px solid #e80000; }
.c1 { left: 1326px; top: 88px; width: 186px; height: 84px; }
.c2 { left: 182px; top: 302px; width: 154px; height: 30px; }
.c3 { left: 1114px; top: 598px; width: 319px; height: 34px; }
```
